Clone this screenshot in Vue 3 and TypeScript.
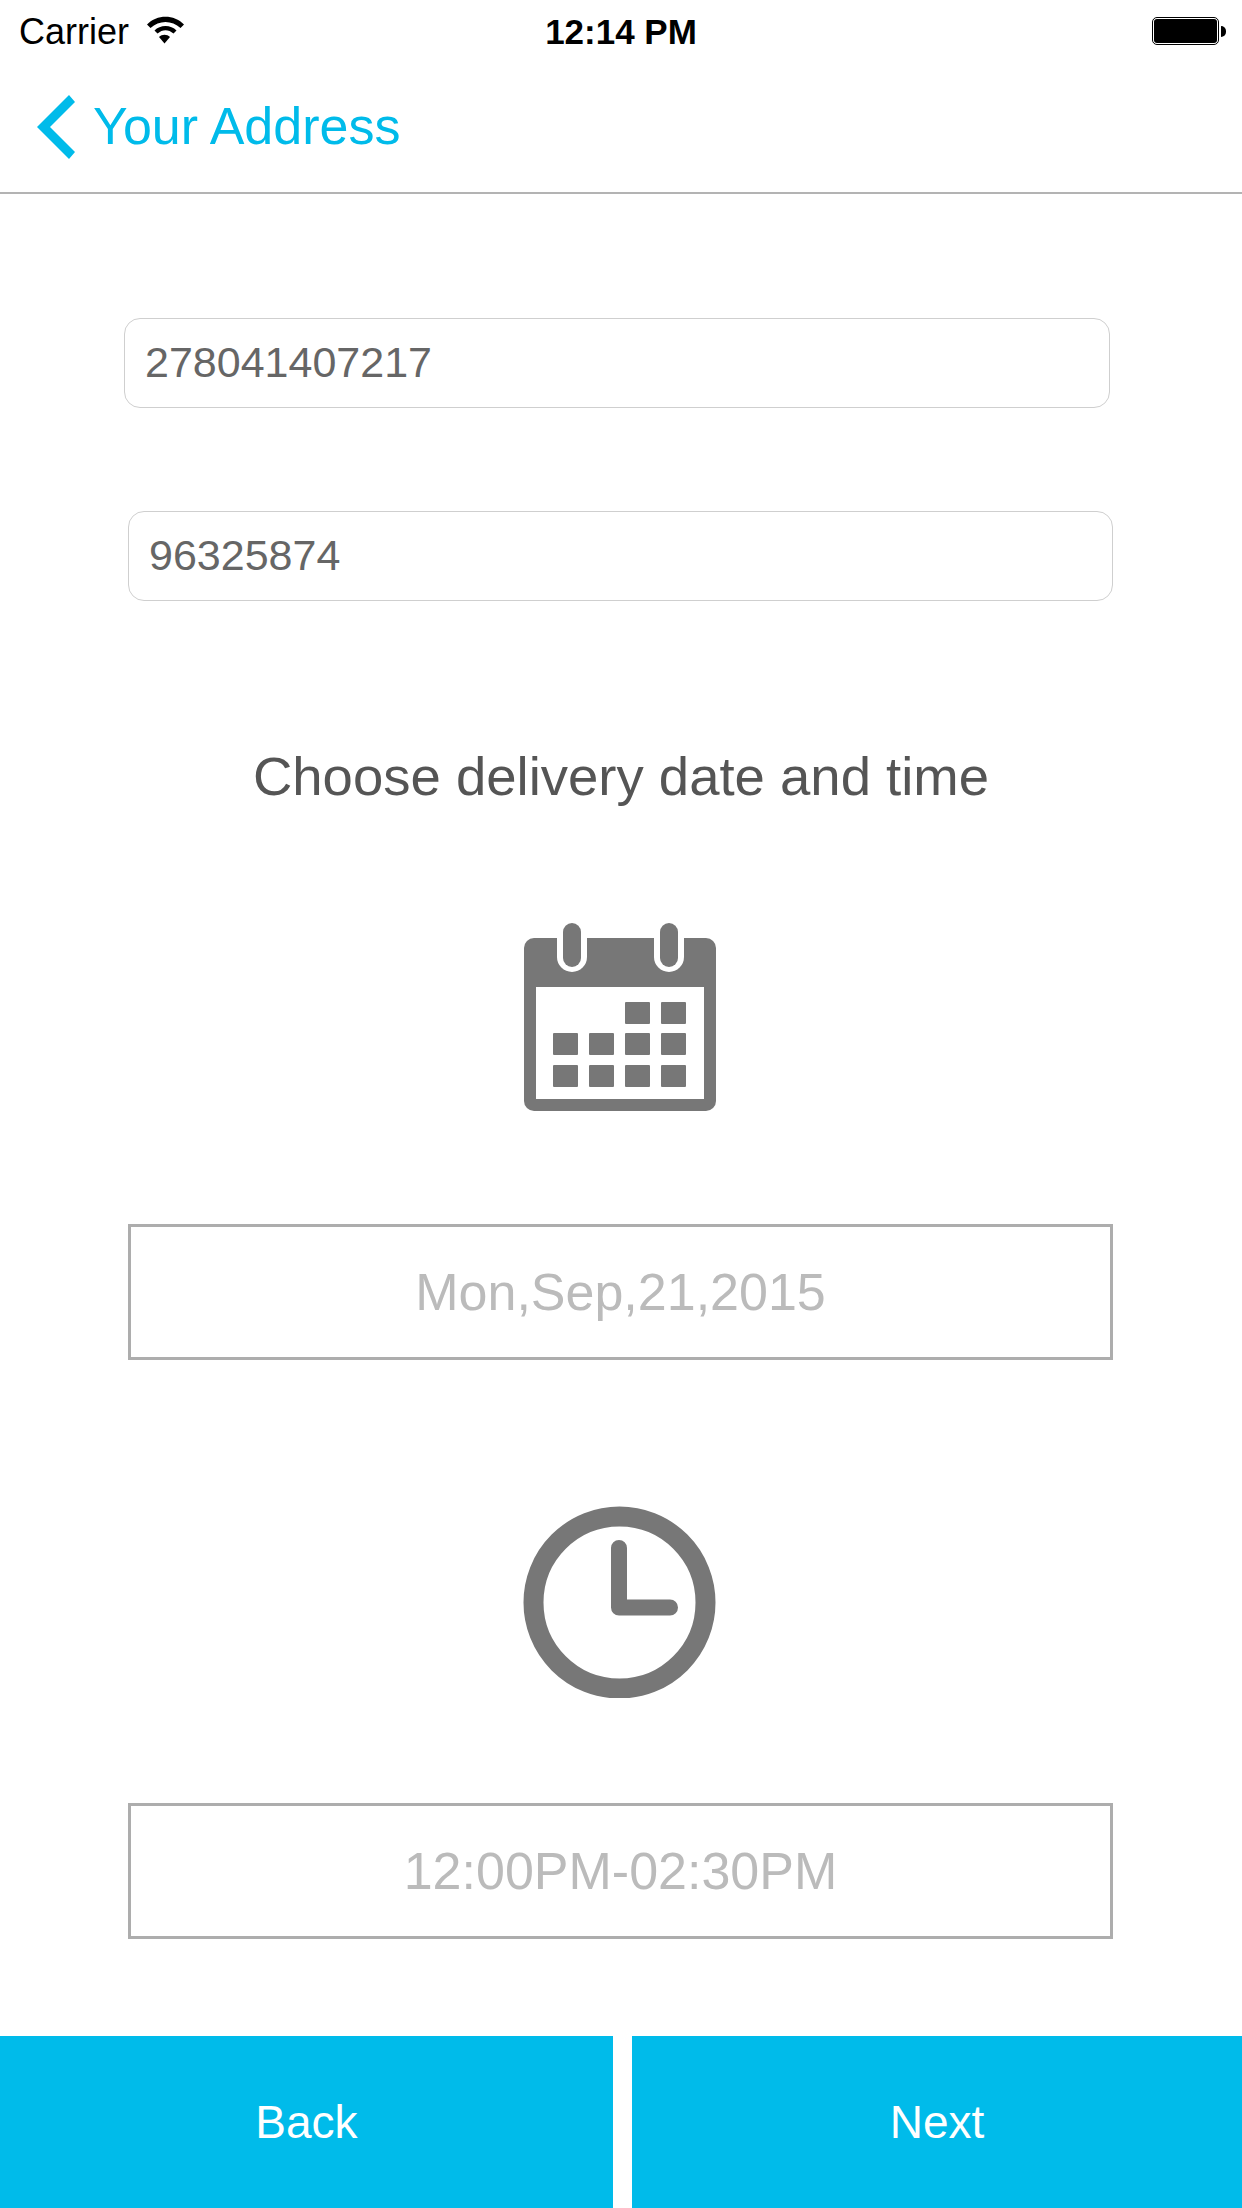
<script setup lang="ts">
const squares: [number, number][] = [
  [135, 102], [171, 102],
  [63, 133], [99, 133], [135, 133], [171, 133],
  [63, 165], [99, 165], [135, 165], [171, 165],
]
</script>

<template>
  <div class="screen">
    <div class="status">
      <div class="status-left">
        <span class="carrier">Carrier</span>
        <svg class="wifi" width="37" height="28" viewBox="0 0 37 28">
          <path d="M0 8.5 C10 -1.8 27 -1.8 37 8.5 L33.5 12 C25 4 12 4 3.5 12 Z" fill="#000" />
          <path d="M7.5 14.5 C13 8.5 24 8.5 29.5 14.5 L26.5 17.5 C21.5 13 15.5 13 10.5 17.5 Z" fill="#000" />
          <path d="M12 21 C15 18 20 18 23 21 L17.5 27.5 Z" fill="#000" />
        </svg>
      </div>
      <span class="clock-text">12:14 PM</span>
      <div class="status-right">
        <div class="battery"><div class="battery-fill"></div></div>
        <div class="battery-nub"></div>
      </div>
    </div>

    <div class="nav">
      <svg class="chevron" width="38" height="64" viewBox="0 0 38 64">
        <path d="M32 0 L38 7 L13 32 L38 57 L32 64 L0 32 Z" fill="#00bbea" />
      </svg>
      <span class="nav-title">Your Address</span>
    </div>

    <main class="content">
      <div class="field field-first">278041407217</div>
      <div class="field field-second">96325874</div>
      <h1 class="heading">Choose delivery date and time</h1>

      <svg class="icon icon-calendar" width="260" height="190" viewBox="0 22 260 190">
        <path d="M44 38 H216 A10 10 0 0 1 226 48 V201 A10 10 0 0 1 216 211 H44 A10 10 0 0 1 34 201 V48 A10 10 0 0 1 44 38 Z" fill="#777" />
        <rect x="46" y="87" width="168" height="112" fill="#fff" />
        <path d="M67 36 H97 V57 A15 15 0 0 1 67 57 Z" fill="#fff" />
        <path d="M164 36 H194 V57 A15 15 0 0 1 164 57 Z" fill="#fff" />
        <rect x="73" y="23" width="18" height="44" rx="9" fill="#777" />
        <rect x="170" y="23" width="18" height="44" rx="9" fill="#777" />
        <rect v-for="s in squares" :key="s.join()" :x="s[0]" :y="s[1]" width="25" height="22" rx="1" fill="#777" />
      </svg>

      <div class="box box-date">Mon,Sep,21,2015</div>

      <svg class="icon icon-clock" width="260" height="192" viewBox="0 26 260 192">
        <circle cx="129.5" cy="122.5" r="86" fill="none" stroke="#777" stroke-width="20" />
        <path d="M129 68 V127.5 H180" fill="none" stroke="#777" stroke-width="16" stroke-linecap="round" stroke-linejoin="round" />
      </svg>

      <div class="box box-time">12:00PM-02:30PM</div>
    </main>

    <div class="footer">
      <div class="btn btn-back">Back</div>
      <div class="btn btn-next">Next</div>
    </div>
  </div>
</template>

<style scoped>
.screen {
  width: 1242px;
  height: 2208px;
  display: flex;
  flex-direction: column;
  background: #fff;
  font-family: "Liberation Sans", Arial, sans-serif;
  overflow: hidden;
}
.status {
  height: 60px;
  display: grid;
  grid-template-columns: 1fr auto 1fr;
  align-items: center;
  flex: none;
}
.status-left {
  display: flex;
  align-items: center;
  padding-left: 19px;
}
.carrier {
  font-size: 36px;
  line-height: 60px;
  margin-top: 2px;
  color: #000;
  white-space: nowrap;
}
.wifi {
  margin-left: 18px;
  margin-top: -2px;
}
.clock-text {
  font-size: 35px;
  font-weight: 700;
  line-height: 60px;
  margin-top: 2px;
  color: #000;
}
.status-right {
  display: flex;
  align-items: center;
  justify-content: flex-end;
  padding-right: 16px;
}
.battery {
  width: 67px;
  height: 28px;
  box-sizing: border-box;
  border: 1px solid #000;
  border-radius: 5px;
  padding: 1px;
  background: #fff;
  flex: none;
}
.battery-fill {
  width: 100%;
  height: 100%;
  background: #000;
  border-radius: 3px;
}
.battery-nub {
  width: 5px;
  height: 11px;
  margin-left: 2px;
  background: #000;
  border-radius: 0 5px 5px 0;
  flex: none;
}
.nav {
  height: 132px;
  border-bottom: 2px solid #b3b3b3;
  display: flex;
  align-items: center;
  padding-left: 37px;
  flex: none;
}
.chevron {
  flex: none;
  margin-top: 2px;
}
.nav-title {
  margin-left: 18px;
  font-size: 52px;
  line-height: 60px;
  color: #00bbea;
  white-space: nowrap;
}
.content {
  flex: 1;
  min-height: 0;
  display: flex;
  flex-direction: column;
}
.field {
  box-sizing: border-box;
  height: 90px;
  border: 1px solid #cfcfcf;
  border-radius: 16px;
  padding: 0 0 2px 20px;
  display: flex;
  align-items: center;
  font-size: 43px;
  color: #666;
}
.field-first {
  width: 986px;
  margin: 124px 0 0 124px;
}
.field-second {
  width: 985px;
  margin: 103px 0 0 128px;
}
.heading {
  margin: 146px 0 0;
  text-align: center;
  font-size: 54.5px;
  font-weight: 400;
  line-height: 60px;
  color: #555;
}
.icon {
  display: block;
  flex: none;
  margin-left: 490px;
}
.icon-calendar {
  margin-top: 115px;
}
.box {
  box-sizing: border-box;
  width: 985px;
  height: 136px;
  margin-left: 128px;
  border: 3px solid #adadad;
  display: flex;
  align-items: center;
  justify-content: center;
  font-size: 52px;
  color: #bbb;
}
.box-date {
  margin-top: 112px;
}
.icon-clock {
  margin-top: 146px;
}
.box-time {
  margin-top: 105px;
}
.footer {
  height: 172px;
  display: flex;
  gap: 19px;
  flex: none;
}
.btn {
  background: #00bbea;
  color: #fff;
  display: flex;
  align-items: center;
  justify-content: center;
  font-size: 46px;
}
.btn-back {
  width: 613px;
}
.btn-next {
  flex: 1;
}
</style>
